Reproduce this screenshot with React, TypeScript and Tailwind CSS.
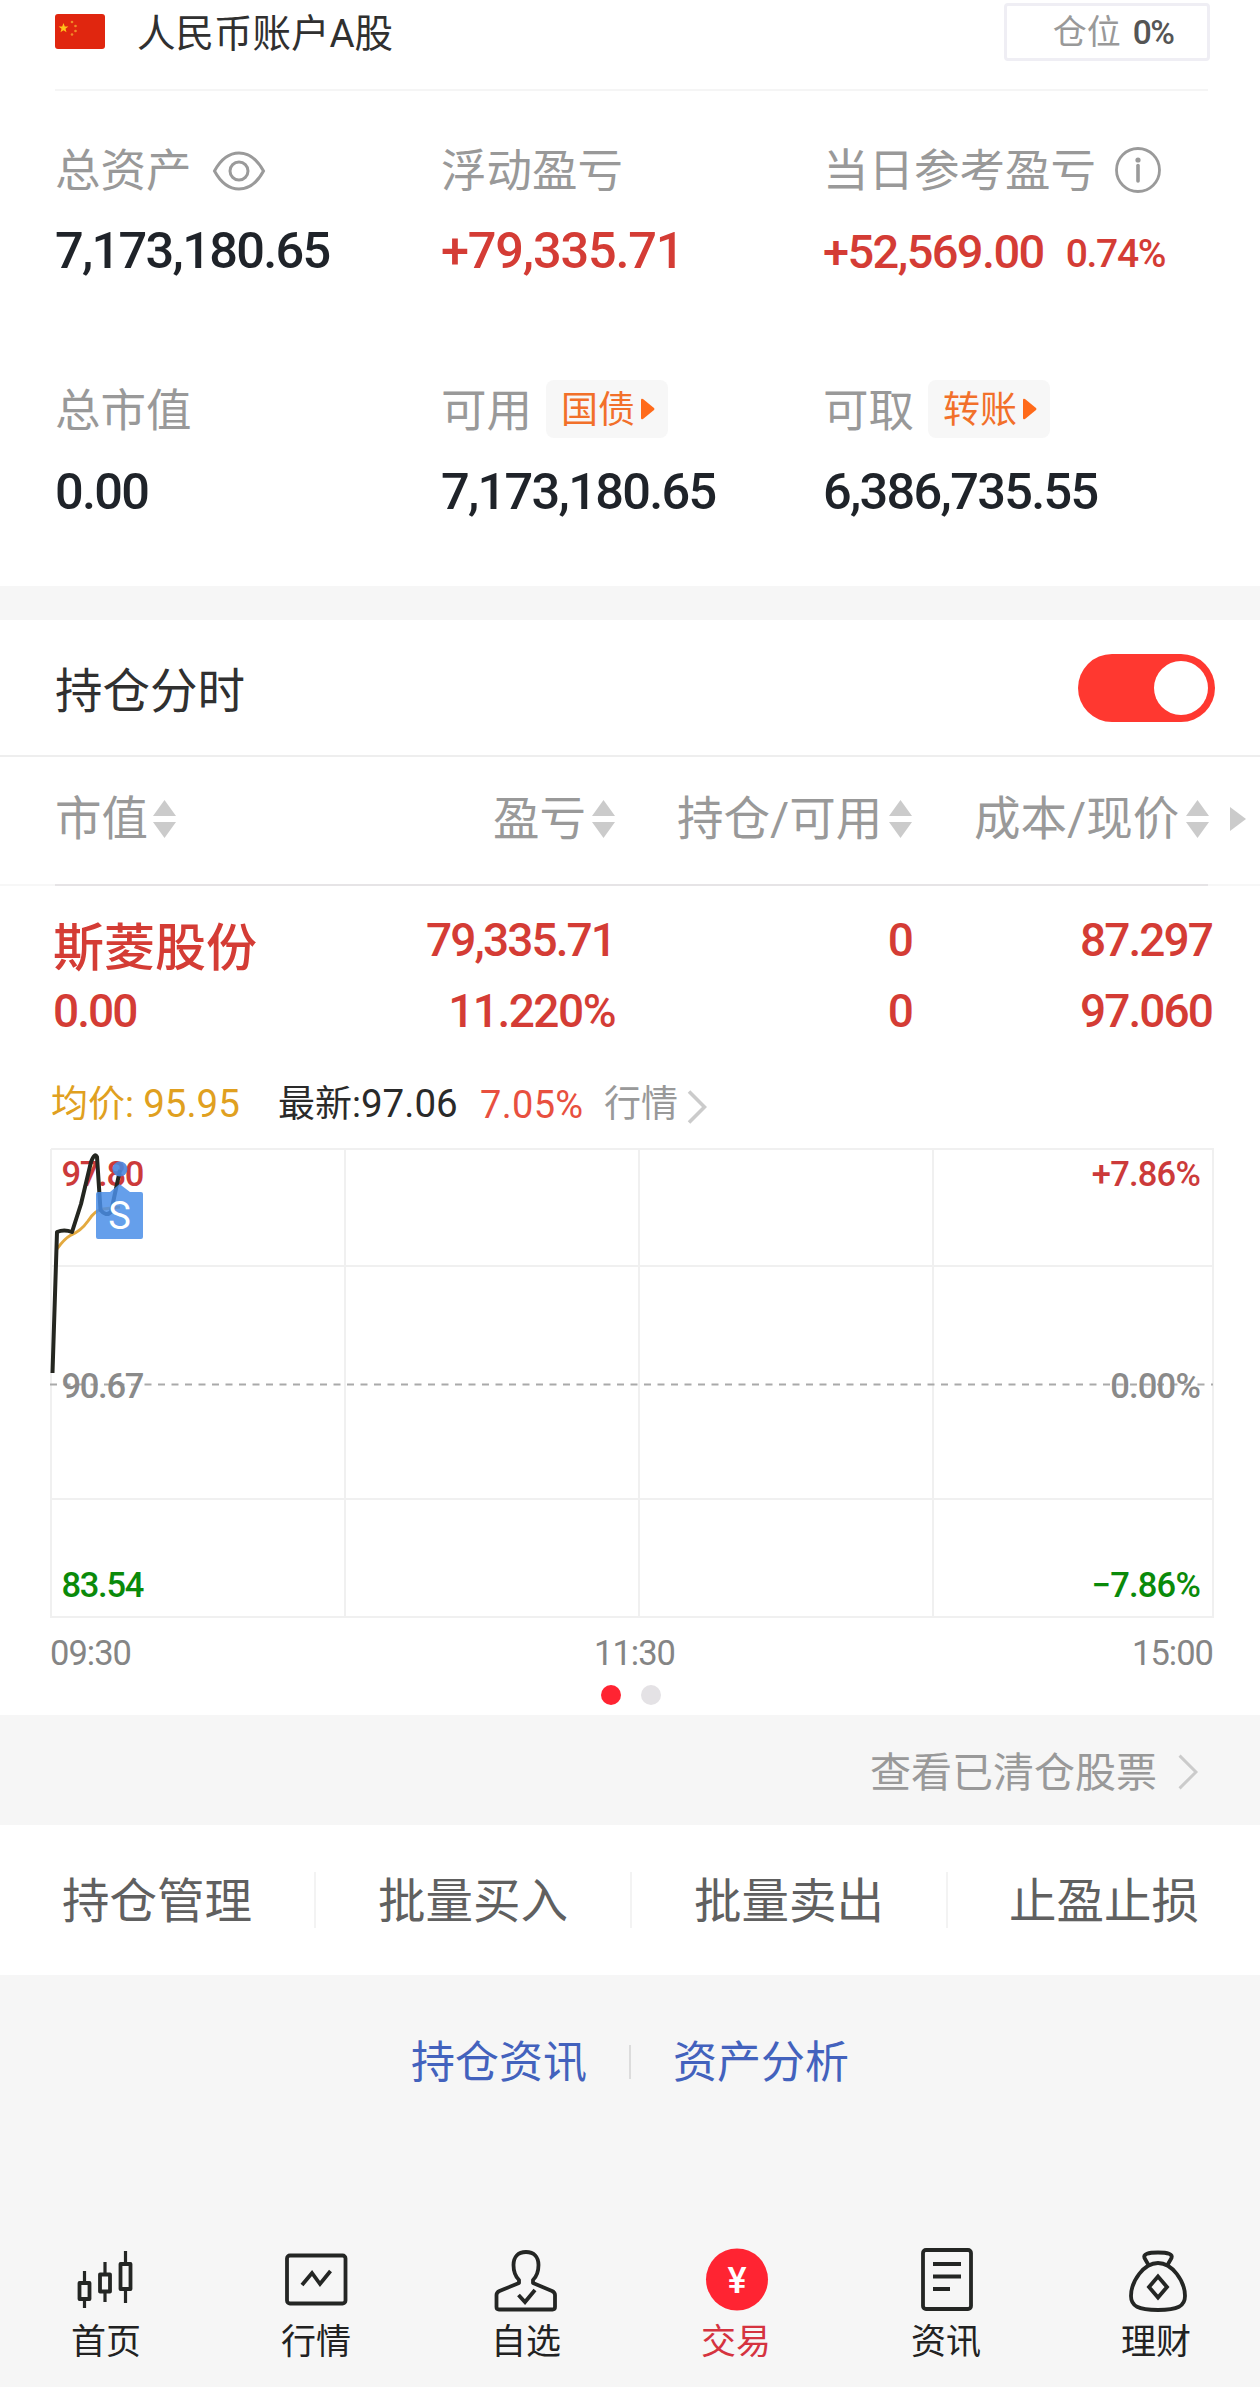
import type { ReactNode } from "react";

const Eye = () => (
  <svg width="54" height="42" viewBox="0 0 54 42" fill="none" stroke="#9a9a9a" strokeWidth="3">
    <path d="M2.500 21C9 9 17 3 27 3s18 6 24.500 18C45 33 37 39 27 39S9 33 2.500 21Z" />
    <circle cx="27" cy="21" r="9" />
  </svg>
);

const Info = () => (
  <svg width="48" height="48" viewBox="0 0 48 48" fill="none" stroke="#9a9a9a">
    <circle cx="24" cy="24" r="21.500" strokeWidth="2.800" />
    <path d="M24 19.500V35" strokeWidth="3.600" strokeLinecap="round" />
    <circle cx="24" cy="14" r="2.600" fill="#9a9a9a" stroke="none" />
  </svg>
);

const Flag = () => (
  <svg width="50" height="35" viewBox="0 0 50 35">
    <rect width="50" height="35" rx="3" fill="#e0260f" />
    <path d="M8.500 9l1.300 3.400 3.600.1-2.900 2.200 1 3.500-3-2-3 2 1-3.500-2.900-2.200 3.600-.1z" fill="#ffc21a" />
    <g fill="#f08a28">
      <circle cx="17" cy="8" r="1.300" />
      <circle cx="20.500" cy="12" r="1.300" />
      <circle cx="20.500" cy="17" r="1.300" />
      <circle cx="17" cy="20.500" r="1.300" />
    </g>
  </svg>
);

const Sort = () => (
  <svg className="shrink-0" width="23" height="40" viewBox="0 0 23 40" fill="#cbcbcb">
    <path d="M11.500 1L23 17H0zM11.500 39L23 23H0z" />
  </svg>
);

const Chevron = ({ w, h, sw }: { w: number; h: number; sw: number }) => (
  <svg width={w} height={h} viewBox="0 0 20 34" fill="none" stroke="#cbcbcb" strokeWidth={sw}>
    <path d="M2 1.500L17.500 17 2 32.500" />
  </svg>
);

const Tag = ({ children }: { children: ReactNode }) => (
  <span className="flex h-[58px] w-[122px] items-center justify-center gap-[6px] rounded-lg bg-[#f7f7f7] pl-0.5 text-[37px] text-[#f2702a]">
    <span className="mt-[3px]">{children}</span>
    <svg width="14" height="22" viewBox="0 0 14 22" fill="#ff6a1a">
      <path d="M0 2Q0 0 2 1L13 10Q14 11 13 12L2 21Q0 22 0 20Z" />
    </svg>
  </span>
);

const Stat = ({ label, extra, children, second }: { label: string; extra?: ReactNode; children: ReactNode; second?: boolean }) => (
  <div className="whitespace-nowrap">
    <div className="flex h-20 items-center text-[45.5px] text-[#999]">
      <span>{label}</span>
      {extra}
    </div>
    <div className={second ? "flex h-20 items-center" : "flex h-[78px] items-center"}>{children}</div>
  </div>
);

const num = "text-[50.5px] font-medium tracking-[-1.7px]";

const Chart = () => (
  <svg className="ml-[50px] block" width="1165" height="470" viewBox="50 1148 1165 470" fontFamily="Roboto, sans-serif">
    <g stroke="#f0f0f0" strokeWidth="2" fill="none">
      <path d="M51 1149H1213V1617H51V1149M345 1149V1617M639 1149V1617M933 1149V1617M50 1266H1213M50 1499H1213" />
    </g>
    <path d="M50 1384.500H1213" stroke="#aaa" strokeWidth="2" strokeDasharray="7 6.500" />
    <g fontSize="34.500" fontWeight="500" letterSpacing="-1.300">
      <text x="61.500" y="1186" fill="#cc3a3a">97.80</text>
      <text x="61.500" y="1398" fill="#8a8a8a">90.67</text>
      <text x="61.500" y="1597" fill="#0a8a0a">83.54</text>
      <g textAnchor="end" letterSpacing="-0.800">
        <text x="1200" y="1186" fill="#cc3a3a">+7.86%</text>
        <text x="1200" y="1398" fill="#8a8a8a">0.00%</text>
        <text x="1200" y="1597" fill="#0a8a0a">−7.86%</text>
      </g>
    </g>
    <path d="M57 1249Q64 1239 71 1235Q81 1231 88 1221Q95 1210 103 1209L120 1207" fill="none" stroke="#e3a93f" strokeWidth="3" />
    <path d="M52.500 1373L57 1232Q64 1229 72 1232L81 1204L91 1162Q95 1152 97 1157L100.500 1210Q106 1217 111 1212L120 1170" fill="none" stroke="#242620" strokeWidth="4" strokeLinejoin="round" />
    <circle cx="120" cy="1169" r="7.500" fill="#4a86dd" fillOpacity="0.900" />
    <path d="M98 1192H110L119.500 1184L130 1192H141Q143 1192 143 1194V1237Q143 1239 141 1239H98Q96 1239 96 1237V1194Q96 1192 98 1192Z" fill="#4a8ee8" fillOpacity="0.850" />
    <text x="119.500" y="1229" textAnchor="middle" fontSize="38" fill="#fff">S</text>
  </svg>
);

const NavIcon = ({ children }: { children: ReactNode }) => (
  <svg width="70" height="72" viewBox="0 0 70 72" fill="none" stroke="#242624" strokeWidth="3.800" strokeLinejoin="round">
    {children}
  </svg>
);

const tabs: { name: string; icon: ReactNode; active?: boolean }[] = [
  {
    name: "首页",
    icon: (
      <>
        <path d="M9.500 40h10v16h-10zM30 31.500h10v17H30zM50.500 21h10v25h-10z" />
        <path d="M14.500 28V39M14.500 57V65M35 19V30M35 50V59M55.500 8V20M55.500 47V60" strokeWidth="3.200" />
      </>
    ),
  },
  {
    name: "行情",
    icon: (
      <>
        <rect x="7" y="12.500" width="58.500" height="48" rx="3" />
        <path d="M22 42L32 30L40 41L50.500 28" strokeLinejoin="miter" />
      </>
    ),
  },
  {
    name: "自选",
    icon: (
      <>
        <path d="M29 40V37C25 33 23.500 29 23.500 22C23.500 14 28 9 36 9S48.500 14 48.500 22C48.500 29 47 33 43 37V40L62 48Q65 49.500 65 52V64Q65 66.500 62.500 66.500H9Q6.500 66.500 6.500 64V52Q6.500 49.500 9.500 48Z" />
        <path d="M28.500 52L35 59L45 47" strokeLinejoin="miter" />
      </>
    ),
  },
  {
    name: "交易",
    active: true,
    icon: (
      <>
        <circle cx="37" cy="36.500" r="31" fill="#ff2432" stroke="none" />
        <text x="37" y="50" textAnchor="middle" fontSize="36" fontWeight="500" fontFamily="Roboto, sans-serif" fill="#fff" stroke="none">¥</text>
      </>
    ),
  },
  {
    name: "资讯",
    icon: (
      <>
        <rect x="13" y="7" width="48" height="59" rx="3" />
        <path d="M23 21H51M23 33.500H51M23 46H40" />
      </>
    ),
  },
  {
    name: "理财",
    icon: (
      <>
        <path d="M38 20C24 20 11 38 11 53C11 63 18 67 38 67S65 63 65 53C65 38 52 20 38 20Z" />
        <path d="M28.500 22L24.500 15C23 11 28 9.500 38 9.500S53 11 51.500 15L47.500 22" />
        <path d="M38 33.500L47 44L38 54.500L29 44Z" strokeLinejoin="miter" />
      </>
    ),
  },
];

const red = "font-medium text-[46px] tracking-[-1.9px]";

export default function App() {
  return (
    <div className="h-[2387px] w-[1260px] overflow-hidden bg-white font-['Roboto','Noto_Sans_CJK_SC',sans-serif] leading-none">
      <header className="ml-[55px] mr-[52px] flex h-[91px] items-start justify-between border-b-2 border-[#f5f5f5]">
        <div className="flex h-[66px] items-center gap-[32px] text-[38.5px] text-[#303030]">
          <span className="-mt-[3px]"><Flag /></span>
          <span className="mt-[3px]">人民币账户A股</span>
        </div>
        <div className="-mr-0.5 mt-[3px] flex h-[58px] w-[206px] items-center justify-center gap-3 rounded border-3 border-[#efeef4] pl-3 text-[34px] text-[#999]">
          仓位 <span className="mt-0.5 text-[33.5px] font-medium tracking-[-1.5px] text-[#555]">0%</span>
        </div>
      </header>

      <section className="grid h-[495px] grid-cols-[386px_382px_1fr] content-start gap-y-[82px] pl-[55px] pt-[41px] text-[#1f2329]">
        <Stat label="总资产" extra={<span className="-mt-0.5 ml-[20px]"><Eye /></span>}>
          <span className={num}>7,173,180.65</span>
        </Stat>
        <Stat label="浮动盈亏">
          <span className="text-[50.5px] font-medium tracking-[-1.2px] text-[#d43c35]">+79,335.71</span>
        </Stat>
        <Stat label="当日参考盈亏" extra={<span className="-mt-1 ml-[18px]"><Info /></span>}>
          <span className="text-[47px] font-medium tracking-[-1.6px] text-[#d43c35]">+52,569.00</span>
          <span className="ml-[22px] mt-1.5 text-[39px] font-medium tracking-[-1.300px] text-[#d43c35]">0.74%</span>
        </Stat>
        <Stat label="总市值" second>
          <span className={num}>0.00</span>
        </Stat>
        <Stat label="可用" second extra={<span className="-mt-1.5 ml-[14px]"><Tag>国债</Tag></span>}>
          <span className={num}>7,173,180.65</span>
        </Stat>
        <Stat label="可取" second extra={<span className="-mt-1.5 ml-[14px]"><Tag>转账</Tag></span>}>
          <span className={num}>6,386,735.55</span>
        </Stat>
      </section>

      <div className="h-[34px] bg-[#f6f6f6]" />

      <section className="flex h-[137px] items-center justify-between border-b-2 border-[#eee] pl-[55px] pr-[45px] text-[47.5px] text-[#303030]">
        <span className="mt-2.5">持仓分时</span>
        <div className="flex h-[68px] w-[137px] items-center justify-end rounded-full bg-[#ff3830] pr-[7px]">
          <div className="size-[54px] rounded-full bg-white" />
        </div>
      </section>

      <section className="relative flex h-[129px] items-center border-b-2 border-[#f7f7f7] pb-[3px] pl-[55px] text-[46.5px] text-[#999]">
        <div className="flex w-[121px] items-center justify-between whitespace-nowrap"><span>市值</span><Sort /></div>
        <div className="ml-[317px] flex w-[122px] items-center justify-between whitespace-nowrap"><span>盈亏</span><Sort /></div>
        <div className="ml-[62px] flex w-[235px] items-center justify-between whitespace-nowrap"><span>持仓/可用</span><Sort /></div>
        <div className="ml-[62px] flex w-[235px] items-center justify-between whitespace-nowrap"><span>成本/现价</span><Sort /></div>
        <svg className="ml-[21px]" width="16" height="24" viewBox="0 0 16 24" fill="#cbcbcb"><path d="M0 0L16 12L0 24Z" /></svg>
        <div className="absolute -bottom-0.5 left-[55px] right-[52px] h-0.5 bg-[#e6e4e6]" />
      </section>

      <section className="flex h-[169px] justify-between pl-[53px] pr-[48px] pt-[18px] text-[#d43c35]">
        <div className="w-[240px]">
          <div className="flex h-[89px] items-center whitespace-nowrap text-[51px] font-medium">斯菱股份</div>
          <div className={red + " -mt-0.5 flex h-10 items-center"}>0.00</div>
        </div>
        <div className="flex flex-1 justify-end">
          <div className={red + " w-[322px] text-right"}>
            <div className="flex h-[71px] items-center justify-end">79,335.71</div>
            <div className="flex h-[71px] items-center justify-end tracking-[-1.5px]">11.220%</div>
          </div>
          <div className={red + " w-[297px] text-right"}>
            <div className="flex h-[71px] items-center justify-end">0</div>
            <div className="flex h-[71px] items-center justify-end">0</div>
          </div>
          <div className={red + " w-[300px] text-right"}>
            <div className="flex h-[71px] items-center justify-end">87.297</div>
            <div className="flex h-[71px] items-center justify-end">97.060</div>
          </div>
        </div>
      </section>

      <section className="flex h-[93px] items-center whitespace-pre pl-[51px] pt-[6px] text-[37px]">
        <span className="w-[227px] text-[#e0a020]">均价: <span className="text-[38.5px]">95.95</span></span>
        <span className="w-[202px] text-[#2a2a2a]">最新:<span className="text-[38.5px]">97.06</span></span>
        <span className="w-[124px] text-[38px] tracking-[0.3px] text-[#e8503f]">7.05%</span>
        <span className="text-[#999]">行情</span>
        <span className="ml-[9px] mt-1"><Chevron w={20} h={34} sw={3.6} /></span>
      </section>

      <Chart />

      <section className="h-[97px] pl-[50px] pr-[47px] pt-[10px]">
        <div className="flex h-[50px] items-center justify-between text-[34.5px] tracking-[-1px] text-[#858585]">
          <span>09:30</span>
          <span className="pl-1.5">11:30</span>
          <span>15:00</span>
        </div>
        <div className="mt-[7px] flex gap-5 pl-[551px]">
          <div className="size-5 rounded-full bg-[#ff2432]" />
          <div className="size-5 rounded-full bg-[#e4e2e5]" />
        </div>
      </section>

      <section className="flex h-[110px] items-center justify-end gap-[20px] bg-[#f6f6f6] pr-[61px] text-[41px] text-[#999]">
        <span className="mt-[7px]">查看已清仓股票</span>
        <span className="mt-1"><Chevron w={22} h={36} sw={2.8} /></span>
      </section>

      <section className="grid h-[150px] grid-cols-[316px_316px_316px_312px] items-center text-center text-[47.5px] text-[#606060]">
        {["持仓管理", "批量买入", "批量卖出", "止盈止损"].map((t, i) => (
          <div key={t} className={"flex h-14 items-center justify-center " + (i < 3 ? "border-r-2 border-[#f3f3f3]" : "")}>
            <span className="mt-1.5">{t}</span>
          </div>
        ))}
      </section>

      <div className="flex h-[412px] flex-col justify-between bg-[#f6f6f6]">
        <div className="mt-[59px] flex h-[56px] items-center justify-center text-[44px] text-[#4362bd]">
          <span className="mt-0.5">持仓资讯</span>
          <div className="mx-[42px] h-[34px] w-0.5 bg-[#dcdcdc]" />
          <span className="mt-0.5">资产分析</span>
        </div>
        <nav className="grid h-[144px] grid-cols-6 text-[35px] text-[#222]">
          {tabs.map((tab) => (
            <div key={tab.name} className={"flex flex-col items-center " + (tab.active ? "text-[#d5333f]" : "")}>
              <NavIcon>{tab.icon}</NavIcon>
              <span className="mt-2.5 pl-0.5">{tab.name}</span>
            </div>
          ))}
        </nav>
      </div>
    </div>
  );
}
